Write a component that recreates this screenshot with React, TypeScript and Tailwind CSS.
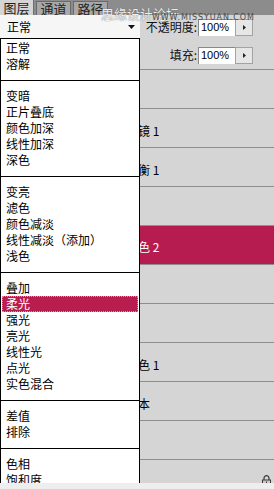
import React from "react"

const cjk = "font-['Noto_Sans_CJK_SC','Noto_Sans',sans-serif]"

const blendGroups = [
  ["正常", "溶解"],
  ["变暗", "正片叠底", "颜色加深", "线性加深", "深色"],
  ["变亮", "滤色", "颜色减淡", "线性减淡（添加）", "浅色"],
  ["叠加", "柔光", "强光", "亮光", "线性光", "点光", "实色混合"],
  ["差值", "排除"],
  ["色相", "饱和度", "颜色", "明度"],
]

const layers = [
  { name: "", pad: "pl-[102px]" },
  { name: "照片滤镜 1", pad: "pl-[102px]" },
  { name: "色彩平衡 1", pad: "pl-[102px]" },
  { name: "", pad: "pl-[102px]" },
  { name: "可选颜色 2", pad: "pl-[102px]", active: true },
  { name: "", pad: "pl-[102px]" },
  { name: "", pad: "pl-[102px]" },
  { name: "可选颜色 1", pad: "pl-[102px]" },
  { name: "背景副本", pad: "pl-[102px]" },
  { name: "", pad: "pl-[102px]" },
  { name: "", pad: "pl-[102px]", locked: true },
]

const Lock = () => (
  <svg width="9" height="11" viewBox="0 0 9 11">
    <path d="M2 5V3.2a2.5 2.5 0 0 1 5 0V5" fill="none" stroke="#3a3a3a" strokeWidth="1.2" />
    <rect x="0.5" y="5" width="8" height="5.5" fill="#c9c9c9" stroke="#3a3a3a" />
    <rect x="4" y="6.5" width="1" height="2" fill="#3a3a3a" />
  </svg>
)

const ValueBox = ({ value }: { value: string }) => (
  <div className="flex h-[17px]">
    <div className="flex w-[37px] items-center border-t border-l border-[#8a8a8a] bg-white pl-[2px] font-['Liberation_Sans',sans-serif] text-[11px] text-black">
      {value}
    </div>
    <div className="flex w-[18px] items-center justify-center border border-[#a3a3a3] bg-[#e6e6e6]">
      <svg width="3" height="5" viewBox="0 0 3 5">
        <path d="M0 0L3 2.5L0 5Z" fill="#222" />
      </svg>
    </div>
  </div>
)

const Tab = ({ label, active }: { label: string; active?: boolean }) => (
  <div
    className={
      active
        ? "flex h-[15px] w-[34px] items-center justify-center border-r border-[#6f6f6f] bg-[#d5d5d5] text-[13px] text-[#222]"
        : "mt-[1px] ml-[2px] flex h-[14px] w-[35px] items-center justify-center border-x border-t border-[#6a6a6a] bg-[#a8a8a8] text-[13px] text-[#222]"
    }
  >
    {label}
  </div>
)

const BlendList = () => (
  <div className="absolute top-[15px] bottom-[6px] left-0 flex w-[140px] flex-col">
    <div className="flex h-[23px] items-center justify-between bg-[#f6f6f6] pr-[5px] pl-[7px] text-[12px] text-black">
      <span>正常</span>
      <svg width="7" height="4" viewBox="0 0 7 4">
        <path d="M0 0H7L3.5 4Z" fill="#111" />
      </svg>
    </div>
    <div className="flex-1 overflow-hidden border-x border-t border-black bg-white pt-[1px]">
      {blendGroups.map((group, gi) => (
        <div key={gi}>
          {gi > 0 && (
            <div className="flex h-[16px] items-center">
              <div className="h-px w-full bg-black" />
            </div>
          )}
          {group.map((mode) =>
            mode === "柔光" ? (
              <div
                key={mode}
                className="mx-[1px] h-[16px] border border-dotted border-[#e48aa8] bg-[#b81d50] pl-[3px] text-[12px] leading-[14px] text-white"
              >
                {mode}
              </div>
            ) : (
              <div key={mode} className="h-[16px] pl-[5px] text-[12px] leading-[16px] text-black">
                {mode}
              </div>
            )
          )}
        </div>
      ))}
    </div>
  </div>
)

export default function App() {
  return (
    <div className={`relative flex h-[489px] w-[274px] flex-col overflow-hidden bg-[#d5d5d5] ${cjk}`}>
      <div className="flex h-[15px] shrink-0 items-start bg-[#8c8c8c]">
        <Tab label="图层" active />
        <Tab label="通道" />
        <Tab label="路径" />
      </div>

      <div className="flex flex-1 flex-col overflow-hidden">
        <div className="flex h-[54px] shrink-0 flex-col items-end gap-[10px] pt-[3px] pr-[21px]">
          <div className="flex items-center gap-[1px] text-[12px] text-[#111]">
            <span>不透明度:</span>
            <ValueBox value="100%" />
          </div>
          <div className="flex items-center gap-[1px] text-[12px] text-[#111]">
            <span>填充:</span>
            <ValueBox value="100%" />
          </div>
        </div>
        {layers.map((layer, i) => (
          <div
            key={i}
            className={
              layer.active
                ? `flex h-[39px] shrink-0 border-t border-[#d46f92] bg-[#b71c50] pt-[12px] text-[12px] text-white ${layer.pad}`
                : `flex h-[39px] shrink-0 border-t border-[#8e8e8e] pt-[13px] text-[12px] text-black ${layer.pad}`
            }
          >
            {layer.locked ? (
              <div className="flex flex-1 justify-end pt-[2px] pr-[3px]">
                <Lock />
              </div>
            ) : (
              <span>{layer.name}</span>
            )}
          </div>
        ))}
      </div>

      <div className="h-[6px] shrink-0 bg-[#eeeeee]" />

      <BlendList />

      <div className="pointer-events-none absolute top-[7px] left-[101px] text-[13px] leading-[14px] text-white/90 [text-shadow:0_0_1px_#444]">
        思缘设计论坛
      </div>
      <div className="pointer-events-none absolute top-[13px] left-[152px] font-['DejaVu_Sans',sans-serif] text-[8px] leading-[9px] tracking-[0.9px] text-[#4d4d4d]">
        WWW.MISSYUAN.COM
      </div>
    </div>
  )
}
